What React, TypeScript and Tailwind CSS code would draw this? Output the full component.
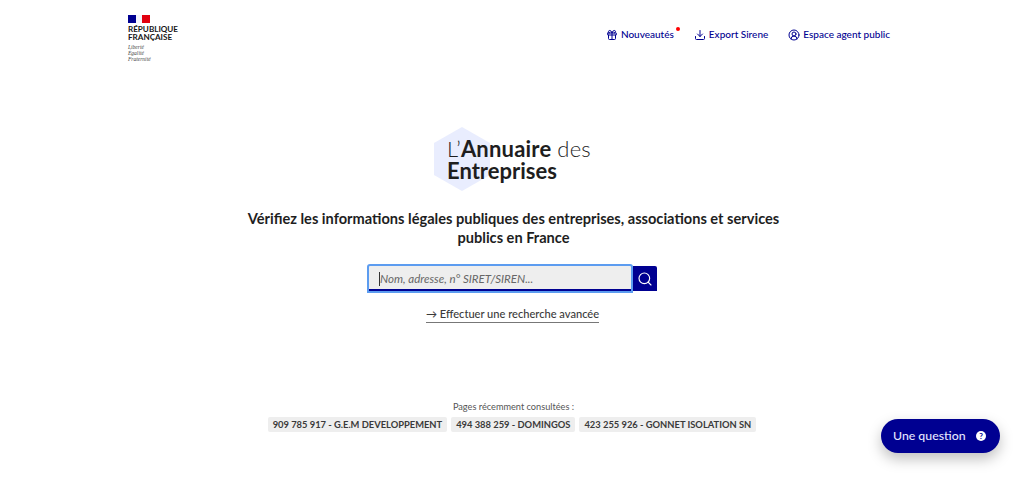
import { Download, Gift, Search, CircleUserRound } from "lucide-react";

const recent = ["909 785 917 - G.E.M DEVELOPPEMENT", "494 388 259 - DOMINGOS", "423 255 926 - GONNET ISOLATION SN"];

function NavLink({ icon, text, dot }: { icon: React.ReactNode; text: string; dot?: boolean }) {
	return (
		<a className="relative flex items-center gap-[3px] text-[10px] font-medium text-[#000091]">
			{icon}
			<span>{text}</span>
			{dot && <span className="absolute top-[0px] right-[-6px] h-[4px] w-[4px] rounded-full bg-[#f00]" />}
		</a>
	);
}

function Logo() {
	return (
		<div className="flex flex-col">
			<svg width="22" height="8" viewBox="0 0 22 8">
				<rect width="8" height="8" fill="#000091" />
				<rect x="8" width="6" height="8" fill="#f5f5fe" />
				<rect x="14" width="8" height="8" fill="#e1000f" />
			</svg>
			<div className="mt-[2px] text-[8.1px] leading-[8px] font-bold text-[#161616]">
				RÉPUBLIQUE
				<br />
				FRANÇAISE
			</div>
			<div className="mt-[3px] font-['Liberation_Serif',serif] text-[5.5px] leading-[6px] text-[#444] italic">
				Liberté
				<br />
				Égalité
				<br />
				Fraternité
			</div>
		</div>
	);
}

export default function App() {
	return (
		<div className="relative h-[477px] w-[1024px] overflow-hidden bg-white font-['Lato',sans-serif] text-[#161616]">
			<header className="flex h-[60px] items-start justify-between pt-[15px] pr-[134px] pl-[128px]">
				<Logo />
				<nav className="mt-[12px] flex items-center gap-[20px]">
					<NavLink icon={<Gift size={12} strokeWidth={2} />} text="Nouveautés" dot />
					<NavLink icon={<Download size={12} strokeWidth={2} />} text="Export Sirene" />
					<NavLink icon={<CircleUserRound size={12} strokeWidth={2} />} text="Espace agent public" />
				</nav>
			</header>

			<main className="mt-[67px] flex flex-col items-center">
				<div className="relative h-[64px] w-[158px]">
					<svg className="absolute top-0 left-[1px]" width="56" height="64" viewBox="0 0 56 64">
						<polygon points="28,0 56,16 56,48 28,64 0,48 0,16" fill="#e9edfe" />
					</svg>
					<div className="relative flex flex-col pt-[11px] pl-[14px] text-[22px] leading-[22px] whitespace-nowrap text-[#1e1e1e]">
						<div className="flex gap-[6px] tracking-[0.2px]">
							<div className="flex">
								<span className="font-light">L’</span>
								<span className="font-bold">Annuaire</span>
							</div>
							<span className="font-light">des</span>
						</div>
						<span className="font-bold">Entreprises</span>
					</div>
				</div>

				<h1 className="mt-[18px] w-[563px] pl-[3px] text-center text-[14.6px] leading-[19px] font-bold text-[#1e1e1e]">
					Vérifiez les informations légales publiques des entreprises, associations et services publics en France
				</h1>

				<form className="mt-[17px] flex items-center">
					<div className="flex h-[29px] w-[266px] items-center rounded-t-[3px] border-2 border-[#5c9cf0] bg-[#eeeeee] pl-[10px] shadow-[inset_0_-2px_0_0_#000091]">
						<span className="h-[14px] w-px bg-[#333]" />
						<span className="text-[11.5px] text-[#666] italic">Nom, adresse, n° SIRET/SIREN...</span>
					</div>
					<button type="button" className="flex h-[25px] w-[24px] items-center justify-center rounded-tr-[2px] bg-[#000091] text-white">
						<Search size={16} strokeWidth={1.7} />
					</button>
				</form>

				<a className="mt-[14px] ml-[1px] border-b border-[#777] pb-[1px] text-[11.1px] leading-[14px] font-medium text-[#3a3a3a]">
					→ Effectuer une recherche avancée
				</a>

				<p className="mt-[78px] ml-[3px] text-[9.2px] leading-[12px] text-[#555]">Pages récemment consultées :</p>
				<div className="mt-[4px] flex gap-[4px]">
					{recent.map((r) => (
						<span key={r} className="rounded-[2px] bg-[#eeeeee] px-[5px] py-[1px] text-[9.35px] leading-[13px] font-bold text-[#3a3a3a]">
							{r}
						</span>
					))}
				</div>
			</main>

			<button
				type="button"
				className="absolute top-[419px] left-[881px] flex h-[34px] w-[119px] items-center justify-between rounded-full bg-[#000091] pr-[14px] pl-[12px] text-[12.3px] font-medium text-[#e6e6ff] shadow-[0_6px_14px_rgba(0,0,0,0.25)]"
			>
				<span>Une question</span>
				<span className="flex h-[10px] w-[10px] items-center justify-center rounded-full bg-white text-[8px] leading-none font-bold text-[#000091]">?</span>
			</button>
		</div>
	);
}
